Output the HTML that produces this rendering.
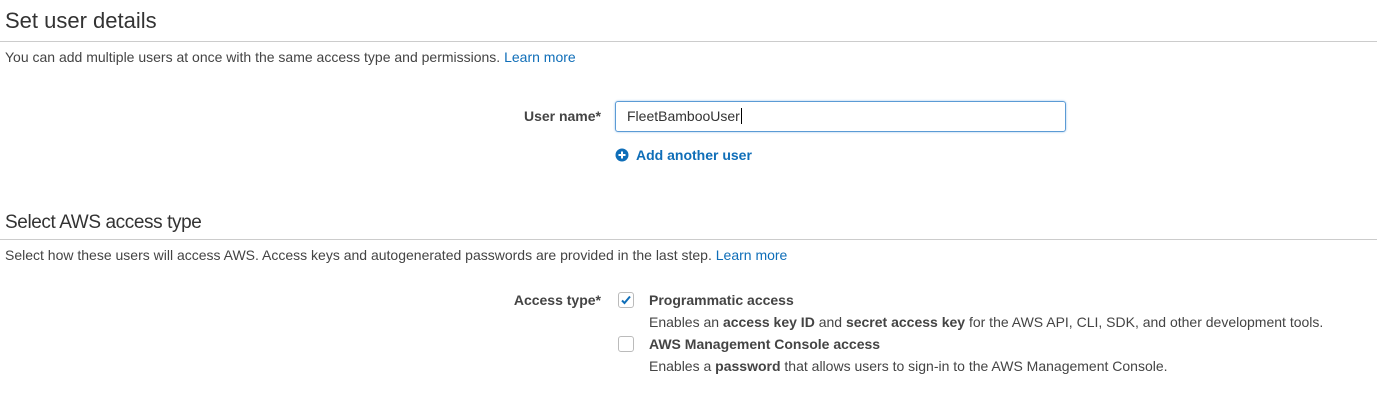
<!DOCTYPE html>
<html><head><style>
body{margin:0;width:1377px;height:408px;background:#fff;font-family:"Liberation Sans",Arial,sans-serif;color:#444;position:relative;overflow:hidden}
.a{position:absolute;white-space:nowrap}
h2{position:absolute;margin:0;font-weight:normal;font-size:19px;color:#333;left:5px}
.hr{position:absolute;left:0;width:1377px;height:1px;background:#ccc}
.p{font-size:14px;color:#444}
a{color:#0f6eb8;text-decoration:none}
.lbl{font-size:14px;font-weight:bold;color:#444}
.cb{position:absolute;width:14px;height:14px;border:1px solid #bbb;border-radius:3px;background:#fff}
</style></head><body>
<h2 style="top:8px;font-size:22px">Set user details</h2>
<div class="hr" style="top:41px"></div>
<div class="a p" style="left:5px;top:49px">You can add multiple users at once with the same access type and permissions. <a>Learn more</a></div>
<div class="a lbl" style="right:776px;top:108px">User name*</div>
<div class="a" style="left:615px;top:101px;border:1px solid #5b9bd5;border-radius:3px;box-shadow:0 0 2px #9cc3ea;font-size:14px;color:#333;line-height:29px;padding-left:11px;box-sizing:border-box;width:451px;height:31px">FleetBambooUser<span style="border-left:1px solid #000;margin-left:1px"></span></div>
<svg class="a" style="left:615px;top:148px" width="14" height="14" viewBox="0 0 14 14"><circle cx="7" cy="7" r="6.5" fill="#0f6eb8"/><path d="M7 3.5v7M3.5 7h7" stroke="#fff" stroke-width="2"/></svg>
<div class="a" style="left:636px;top:147px;font-size:14px;font-weight:bold;color:#0f6eb8">Add another user</div>
<h2 style="top:212px;letter-spacing:-0.4px">Select AWS access type</h2>
<div class="hr" style="top:239px"></div>
<div class="a p" style="left:5px;top:247px">Select how these users will access AWS. Access keys and autogenerated passwords are provided in the last step. <a>Learn more</a></div>
<div class="a lbl" style="right:776px;top:292px">Access type*</div>
<div class="cb" style="left:618px;top:292px"></div>
<svg class="a" style="left:620px;top:294px" width="12" height="12" viewBox="0 0 12 12"><path d="M2 6.5l2.5 2.5L10 2.5" stroke="#0f6eb8" stroke-width="2" fill="none"/></svg>
<div class="a lbl" style="left:649px;top:292px">Programmatic access</div>
<div class="a p" style="left:649px;top:314px">Enables an <b>access key ID</b> and <b>secret access key</b> for the AWS API, CLI, SDK, and other development tools.</div>
<div class="cb" style="left:618px;top:336px"></div>
<div class="a lbl" style="left:649px;top:336px">AWS Management Console access</div>
<div class="a p" style="left:649px;top:358px">Enables a <b>password</b> that allows users to sign-in to the AWS Management Console.</div>
</body></html>
